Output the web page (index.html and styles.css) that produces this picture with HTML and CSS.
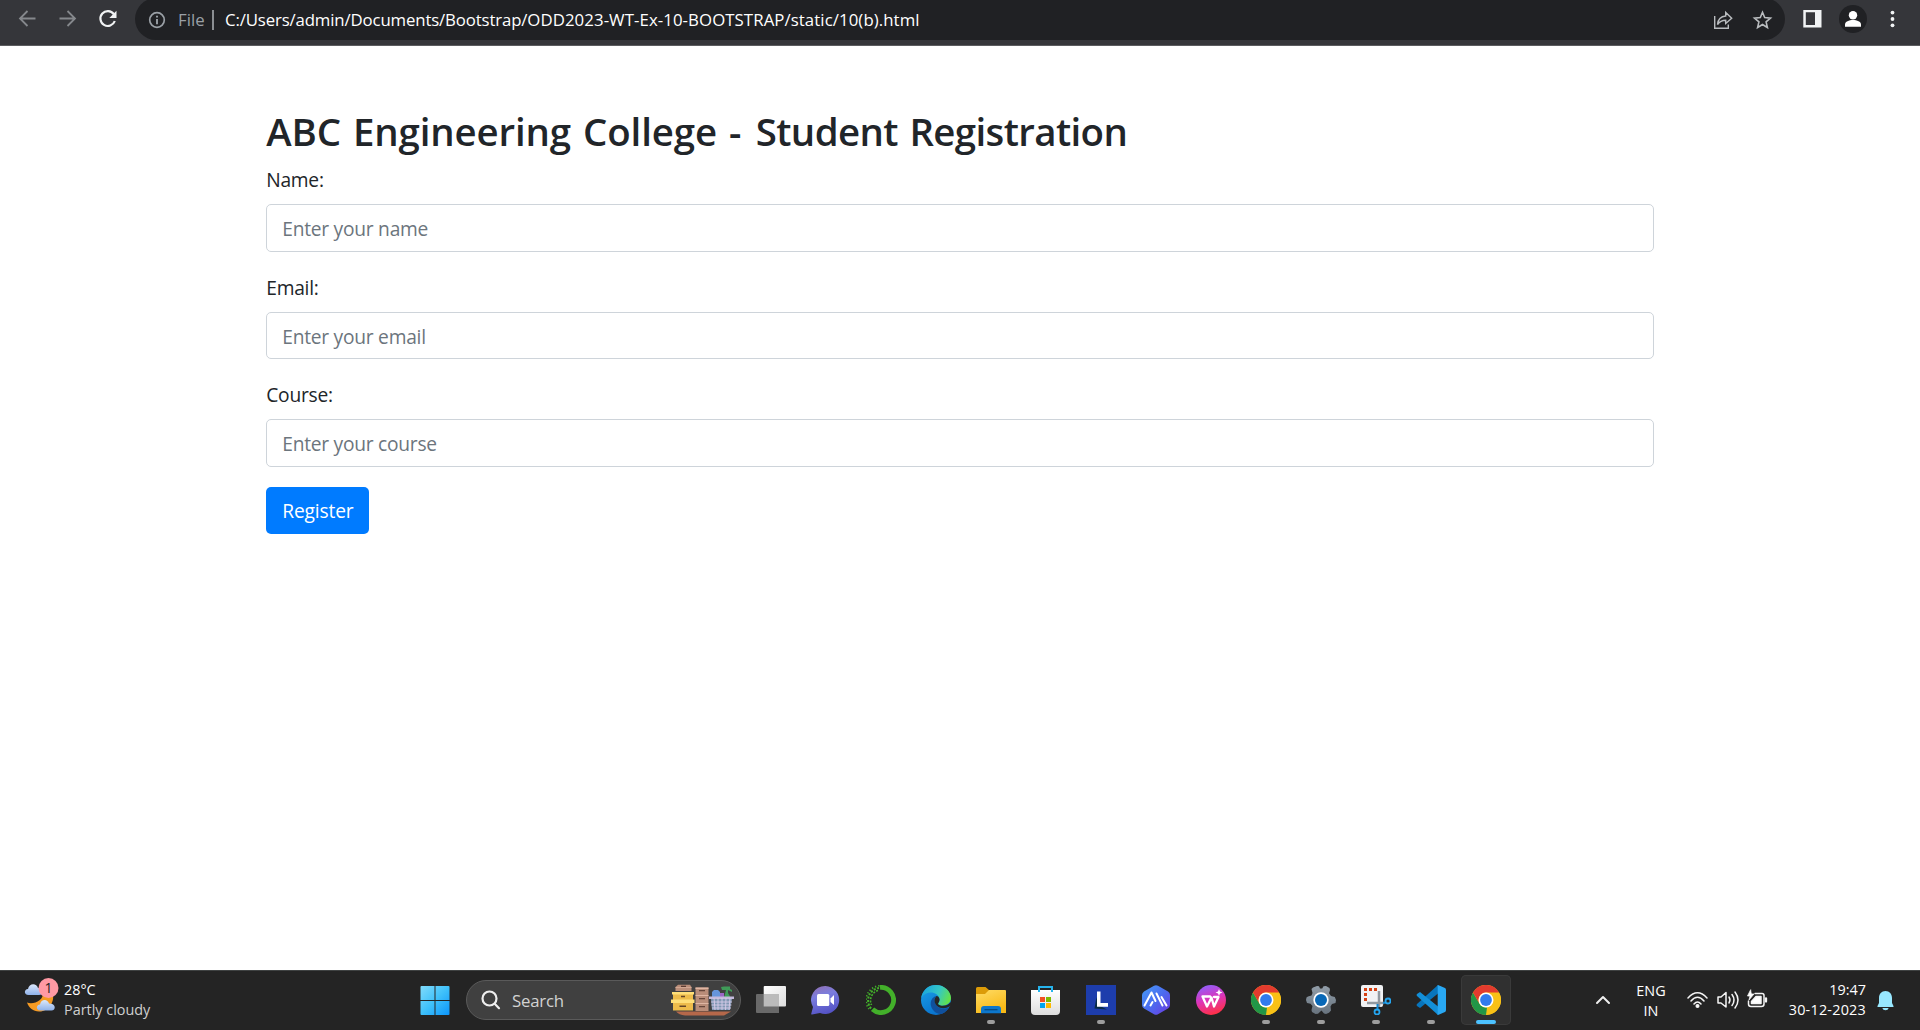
FILE: index.html
```html
<!DOCTYPE html>
<html lang="en">
<head>
<meta charset="utf-8">
<title>Student Registration</title>
<link rel="stylesheet" href="styles.css">
</head>
<body>
<header class="toolbar">
  <svg class="nav-icons" width="135" height="45" viewBox="0 0 135 45" fill="none">
    <path d="M35.500 18.500H20.500M27.500 11L20 18.500L27.500 26M59.500 18.500H74.500M67.500 11L75 18.500L67.500 26" stroke="#85888c" stroke-width="1.800"/>
    <path d="M113.800 14.200A7.400 7.400 0 1 0 114.800 21" stroke="#f1f3f4" stroke-width="2.200"/>
    <path d="M116.500 10.800V18H109.300Z" fill="#f1f3f4"/>
  </svg>
  <div class="omnibox">
    <svg class="info" width="18" height="18" viewBox="0 0 18 18" fill="none" stroke="#9aa0a6"><circle cx="9" cy="9" r="7.300" stroke-width="1.700"/><path d="M9 8V13.200M9 4.800V6.600" stroke-width="1.900"/></svg>
    <span class="scheme">File</span>
    <span class="divider"></span>
    <span class="url"><span class="url-root">C:/Users/admin/Documents/Bootstrap/</span><span class="url-rest">ODD2023-WT-Ex-10-BOOTSTRAP/static/10(b).html</span></span>
    <svg class="actions" width="60" height="20" viewBox="0 0 60 20" fill="none" stroke="#b9bcbf" stroke-width="1.400">
      <path d="M1.700 6V18.300H15.300V14.500M4.500 14.500C5 9 8 6.400 12.700 6V2.500L18.700 8.200L12.700 13.500V10.200C8.800 10.200 6.500 11.500 4.500 14.500Z"/>
      <path d="M49.500 2.300L51.700 7.600L57.500 8.100L53.100 11.900L54.400 17.500L49.500 14.500L44.600 17.500L45.900 11.900L41.500 8.100L47.300 7.600Z" stroke-width="1.600"/>
    </svg>
  </div>
  <svg class="menu-icons" width="135" height="45" viewBox="0 0 135 45">
    <path fill="#f1f3f4" fill-rule="evenodd" d="M18.300 10H36.500V27.500H18.300ZM20.800 12.300V25H30V12.300Z"/>
    <circle cx="68" cy="19" r="14" fill="#202124"/>
    <circle cx="68" cy="15.200" r="4.200" fill="#fff"/><path d="M60 26.700V24.500C60 18.500 76 18.500 76 24.500V26.700Z" fill="#fff"/>
    <g fill="#f1f3f4"><circle cx="107.500" cy="12.600" r="1.900"/><circle cx="107.500" cy="19" r="1.900"/><circle cx="107.500" cy="25.300" r="1.900"/></g>
  </svg>
</header>

<main class="container">
  <h2><span class="college">ABC Engineering College <span class="dash">-</span> </span>Student Registration</h2>
  <form>
    <div class="form-group"><label for="name">Name:</label><input class="form-control" id="name" placeholder="Enter your name"></div>
    <div class="form-group"><label for="email">Email:</label><input class="form-control" id="email" placeholder="Enter your email"></div>
    <div class="form-group"><label for="course">Course:</label><input class="form-control" id="course" placeholder="Enter your course"></div>
    <button class="btn" type="button">Register</button>
  </form>
</main>

<footer class="taskbar">
  <div class="weather">
    <svg width="40" height="40" viewBox="0 0 40 40">
      <defs><linearGradient id="cloud" x2="0" y2="1"><stop stop-color="#dbe8fb"/><stop offset="1" stop-color="#8fb2ea"/></linearGradient></defs>
      <path d="M7 24.500C13 27 24 23 23 14H31.500C37 22 28 34 19 33.500C13 33.500 9 30 7 24.500Z" fill="#f59a23"/>
      <path d="M8.500 17C3.500 17 4 11 8 11C9 4.500 17 5 18 10C24 10 24 17 19 17Z" fill="url(#cloud)"/>
      <path d="M20.500 32.500C15.500 32.500 16 26.500 20 26.500C21 20.500 28 21 29 25.500C36.500 25.500 36 32.500 31.500 32.500Z" fill="url(#cloud)"/>
      <circle cx="28.500" cy="10" r="10" fill="#ff99a4"/>
      <text x="28.500" y="15" class="badge-text">1</text>
    </svg>
    <div class="weather-text"><div>28°C</div><div class="dim">Partly cloudy</div></div>
  </div>

  <div class="apps">
    <div class="app">
      <svg width="30" height="30" viewBox="-.5 0 30 30"><defs><linearGradient id="win" gradientUnits="userSpaceOnUse" x1="0" y1="0" x2="30" y2="30"><stop stop-color="#83dcfc"/><stop offset=".5" stop-color="#3fc1fa"/><stop offset="1" stop-color="#0a93fb"/></linearGradient></defs><path fill="url(#win)" d="M0 2Q0 1 1 1H14V15H0ZM15 1H28Q29 1 29 2V15H15ZM0 16H14V30H1Q0 30 0 29ZM15 16H29V29Q29 30 28 30H15Z"/></svg>
    </div>
    <div class="search">
      <svg width="20" height="20" viewBox="0 0 20 20" fill="none" stroke="#eee" stroke-width="2.200" stroke-linecap="round"><circle cx="8.500" cy="8.500" r="7"/><path d="M13.700 13.700L18 18.200"/></svg>
      <span class="search-label">Search</span>
      <svg class="art" width="64" height="32" viewBox="0 0 64 32">
        <path d="M5 27.500H60L53 31.500H14Q8 31 5 27.500Z" fill="#b5684a"/>
        <path d="M4.500 7V3L7 .7H19L20.500 3V7Z" fill="#b98d79"/><path d="M4.500 3H20.500V4H4.500Z" fill="#d1a793"/><path d="M10 1.700H15V3H10Z" fill="#5b3c32"/>
        <path d="M2 9H22V16H2Z" fill="#eebc4b"/><path d="M1 8H23V10.500H1Z" fill="#ffdf78"/><path d="M2 18H22V26.500H2Z" fill="#eebc4b"/><path d="M0 15.500H23.500V19H0Z" fill="#ffdf78"/>
        <path d="M10 11.800H14V13.200H10ZM8.500 21.500H15V23H8.500Z" fill="#654626"/>
        <path d="M24.500 3.500H37.500V27H24.500Z" fill="#b98d79"/><path d="M24.500 3.500H37.500V5H24.500ZM24.500 11H37.500V12H24.500ZM24.500 19H37.500V20H24.500Z" fill="#dfb6a3"/><path d="M28 6H34V7.200H28ZM28 14H34V15.200H28ZM28 22H34V23.200H28Z" fill="#66463a"/>
        <path d="M41 8L43 6H47L49 8V15H41Z" fill="#6695dc"/><path d="M49 9H53V14H49Z" fill="#9b67c5"/>
        <path d="M50 3L53 2.500H59V5L61 6V8L57 6V9L60 14H53L55 6H51Z" fill="#3f9b58"/>
        <path d="M40 15H61L59 26H41Z" fill="#8198b4"/><path d="M38 12.500H63V15H38Z" fill="#c4badc"/>
        <path d="M40 18H61M40.500 21H60.500M41 24H60M43 14L44 26M47 14V26M51 14V26M55 14L54.500 26M59 14L58 26" stroke="#d7cce9" stroke-width=".9"/>
      </svg>
    </div>
    <div class="app">
      <svg width="30" height="30" viewBox="0 0 30 30"><defs><linearGradient id="tv" x1="0" y1="0" x2="1" y2="1"><stop stop-color="#fff"/><stop offset="1" stop-color="#ddd"/></linearGradient></defs><rect x="7.700" y="1" width="22.300" height="20.500" rx="1" fill="url(#tv)"/><path d="M1 9H23V28H1Q0 28 0 27V10Q0 9 1 9Z" fill="#696969"/><path d="M7.700 9H23V21.500H7.700Z" fill="#bbb"/></svg>
    </div>
    <div class="app">
      <svg width="30" height="30" viewBox="0 0 30 30"><defs><linearGradient id="chat" x1=".2" y1="0" x2=".5" y2="1"><stop stop-color="#8f70b5"/><stop offset=".35" stop-color="#7b7dde"/><stop offset="1" stop-color="#5351c4"/></linearGradient></defs><path d="M14.500 1A14 14 0 1 1 9 28L1 29.500Q0 29.500 .3 28.500L2 22A14 14 0 0 1 14.500 1Z" fill="url(#chat)"/><rect x="6" y="9" width="12.300" height="12" rx="1.500" fill="#fff"/><path d="M19.500 13.500L23 10V20L19.500 17Z" fill="#fff"/></svg>
    </div>
    <div class="app">
      <svg width="30" height="30" viewBox="0 0 30 30" fill="none" stroke="#43b02a"><path d="M14 2.400A12.600 12.600 0 1 1 6.500 24.300" stroke-width="4.800"/><path d="M13 3A12.500 12.500 0 0 0 5.500 24" stroke-width="2" stroke-dasharray="2 1.500"/><path d="M13.500.8A14.500 14.500 0 0 0 3 24" stroke-width="1.700" stroke-dasharray="1.300 2"/><path d="M12 5.500A10.500 10.500 0 0 0 5.500 20" stroke-width="1.600" stroke-dasharray="2 1.300"/></svg>
    </div>
    <div class="app">
      <svg width="30" height="30" viewBox="0 0 30 30"><defs><linearGradient id="eg" x1="0" y1=".3" x2="1" y2=".6"><stop stop-color="#19a4df"/><stop offset=".55" stop-color="#35c7c4"/><stop offset="1" stop-color="#65e343"/></linearGradient><linearGradient id="eb" x2=".6" y2="1"><stop stop-color="#1ba1e8"/><stop offset="1" stop-color="#0870cc"/></linearGradient></defs><circle cx="15" cy="15" r="15" fill="url(#eb)"/><path d="M.2 13C1.500 4.500 8 0 15 0C23.500 0 30 6.500 30 13C30 20 21 22.500 17.500 19.500C16.200 18 19 17.300 18.500 14C17 6 5 5 .2 13Z" fill="url(#eg)"/><path d="M15.500 11C10.500 12 9 17 10 21C11.500 26 16 29.500 20.500 28.900C24 27.500 27 25 28 22.500C24 24.500 18 24 15.500 20.500C13 17 12.700 13 15.500 11Z" fill="#10509d"/><path d="M15.500 11C12.500 14 13 18 16 21C19.500 24 25 24 29 21L31 24V20L29.500 17C27 21 20.500 22 17.500 19.500C16 18 19 17.300 18.500 14C18 12 17 11 15.500 11Z" fill="#262626"/></svg>
    </div>
    <div class="app open">
      <svg width="30" height="30" viewBox="0 0 30 30"><defs><linearGradient id="fo" x2=".5" y2="1"><stop stop-color="#ffdc66"/><stop offset="1" stop-color="#f8b916"/></linearGradient></defs><path d="M0 12V3.500Q0 2 1.500 2H9.500L13 5H28Q29 5 29 7V12Z" fill="#dc9b08"/><path d="M0 9H9L13 5H29Q30 5 30 6V28H0Z" fill="url(#fo)"/><path d="M5 28.200V24Q5 21 8 21H22Q25 21 25 24V28.200Z" fill="#0d77cc"/><path d="M8.500 24.700H21.500" stroke="#064b83" stroke-width="1.300"/></svg>
    </div>
    <div class="app">
      <svg width="30" height="30" viewBox="0 0 30 30"><defs><linearGradient id="st" x2="0" y2="1"><stop stop-color="#fff"/><stop offset="1" stop-color="#ddd"/></linearGradient></defs><path d="M0 5H29V26Q29 30 25 30H4Q0 30 0 26Z" fill="url(#st)"/><path d="M8 7V2H21V7" fill="none" stroke="#26b4ed" stroke-width="2"/><path fill="#f25022" d="M9 12H14V17H9Z"/><path fill="#7fba00" d="M15 12H20V17H15Z"/><path fill="#00a4ef" d="M9 18H14V23H9Z"/><path fill="#ffb900" d="M15 18H20V23H15Z"/></svg>
    </div>
    <div class="app open">
      <svg width="30" height="30" viewBox="0 0 30 30"><path d="M0 0H30V30H0Z" fill="#1d3dac"/><path d="M10.500 12L8.500 23.500L21 24.500L12 20Z" fill="#092b47"/><path d="M11 6.500H14.500V18H22V21.700H11Z" fill="#fff"/></svg>
    </div>
    <div class="app">
      <svg width="30" height="30" viewBox="0 0 30 30"><defs><linearGradient id="hx" x2="1" y2="1"><stop stop-color="#469df5"/><stop offset=".5" stop-color="#4b6cf0"/><stop offset="1" stop-color="#6d38df"/></linearGradient></defs><path d="M13 .8Q15 -.2 17 .8L27 6.500Q29 7.500 29 10V20Q29 22 27 23.500L17 29.200Q15 30.200 13 29.200L3 23.500Q1 22 1 20V10Q1 8 3 6.500Z" fill="url(#hx)"/><path d="M3.500 20.500L10.500 7.500L14.500 16M9.500 20.500L11.500 17M15.500 8.500L21.500 20.500M20.500 12L25.500 20.500" fill="none" stroke="#fff" stroke-width="2" stroke-linecap="round" stroke-linejoin="round"/></svg>
    </div>
    <div class="app">
      <svg width="30" height="30" viewBox="0 0 30 30"><defs><linearGradient id="wp" x1=".2" y1="0" x2=".5" y2="1"><stop stop-color="#8b62ff"/><stop offset=".5" stop-color="#dc35bb"/><stop offset="1" stop-color="#ff3047"/></linearGradient></defs><circle cx="15" cy="15" r="15" fill="url(#wp)"/><path d="M14 11.500H6.500L11 21.500L15.500 12.500L18 21.500L22.500 12H18" fill="none" stroke="#fff" stroke-width="2.300" stroke-linejoin="round" stroke-linecap="round"/><path d="M23 4L24 6.500L26.500 7.500L24 8.500L23 11L22 8.500L19.500 7.500L22 6.500Z" fill="#fff"/></svg>
    </div>
    <div class="app open">
      <svg width="30" height="30" viewBox="0 0 30 30"><g id="chrome"><circle cx="15" cy="15" r="15" fill="#f9c116"/><path d="M2 7.500L8.500 18.800Q11 23 16 22.500L15 30A15 15 0 0 1 2 7.500Z" fill="#229647"/><path d="M21.500 18.700L15 30A15 15 0 0 0 28 7.500H15A7.500 7.500 0 0 1 21.500 18.700Z" fill="#f9c116"/><path d="M2 7.500L8.500 18.700A7.500 7.500 0 0 1 15 7.500H28A15 15 0 0 0 2 7.500Z" fill="#e33b2e"/><circle cx="15" cy="15" r="7.500" fill="#fff"/><circle cx="15" cy="15" r="5.900" fill="#317bed"/></g></svg>
    </div>
    <div class="app open">
      <svg width="30" height="30" viewBox="0 0 30 30"><defs><linearGradient id="gear" x2="0" y2="1"><stop stop-color="#919da8"/><stop offset="1" stop-color="#68737e"/></linearGradient></defs><path d="M11 .9L13 1.300L14 3.600H16.200L17.500 1.300L20 1.100L23.500 3L24 5L23 8.200L25 11L28.800 12L30 15L29.500 18L26 19L24.500 21.500L25 25.500L23 27.700L20 29L18 28.500L15.500 25.500L12 28.700L9.500 29L6 27L5.500 25L6.500 21L4.500 18.800L1 18L0 15L.5 12.500L2 11.500L5.500 10.500L6.500 8L5.500 4L7 2.500Z" fill="url(#gear)"/><circle cx="15" cy="15" r="7.700" fill="#fff"/><circle cx="15" cy="15" r="6" fill="#0868b7"/></svg>
    </div>
    <div class="app open">
      <svg width="30" height="30" viewBox="0 0 30 30"><rect width="22" height="22" rx="2" fill="#f1f2f4"/><path d="M4.500 16V4.500H18" fill="none" stroke="#d64012" stroke-width="3" stroke-dasharray="3 2"/><path d="M18 6V22M6 18H23" fill="none" stroke="#9299a0" stroke-width="2.500"/><path d="M16.500 19V24M22 18L25 17.500" stroke="#1687cf" stroke-width="2"/><circle cx="27" cy="16" r="2.500" fill="#242424" stroke="#25a5ef" stroke-width="1.800"/><circle cx="16" cy="27" r="2.500" fill="#242424" stroke="#25a5ef" stroke-width="1.800"/></svg>
    </div>
    <div class="app open">
      <svg width="30" height="30" viewBox="0 0 30 30"><path d="M22 8.500L4 23L1 21Q0 20 1 19L22 0Z" fill="#0875bc"/><path d="M22 21.500L4 7L1 9Q0 10 1 11L22 30Z" fill="#138fd8"/><path d="M22 0L29 3Q30 3.500 30 5V25Q30 26.500 29 27L22 30Q21 29.500 21.700 28.500V1.500Q21 .5 22 0Z" fill="#29a8f3"/></svg>
    </div>
    <div class="app open active"><svg width="30" height="30" viewBox="0 0 30 30"><use href="#chrome"/></svg></div>
  </div>

  <div class="tray">
    <svg class="chevron" width="16" height="10" viewBox="0 0 16 10" fill="none" stroke="#eee" stroke-width="2" stroke-linecap="round" stroke-linejoin="round"><path d="M2 8L8 2L14 8"/></svg>
    <div class="lang"><div>ENG</div><div>IN</div></div>
    <svg class="status" width="82" height="22" viewBox="0 0 82 22" fill="none" stroke="#f4f4f4" stroke-width="1.500" stroke-linecap="round" stroke-linejoin="round">
      <path d="M1 9Q10.500 -1.500 20 9M4 12Q10.500 4.500 17 12M7 15Q10.500 11 14 15"/><circle cx="10.500" cy="17" r="1.300" fill="#fff"/>
      <path d="M31 8H34L39 3.500V18L34 14H31Z"/><path d="M42 8Q44 11 42 14M45 5.500Q49 11 45 16.500M48 3Q54 11 48 19"/>
      <path d="M68 4.500H75Q77 4.500 77 6.500V15Q77 17.500 74.500 17.500H64Q61.500 17.500 61.500 15V12"/><path d="M69 7.500H74V14.500H64.500V12.500Z" fill="#fff"/><path d="M79 9.500V12.500" stroke-width="2.300"/><path d="M63.500 1L60.500 7H63L62 11L67 5H64.500Z" fill="#fff" stroke-width=".8"/>
    </svg>
    <div class="clock"><div>19:47</div><div class="date">30-12-2023</div></div>
    <svg class="bell" width="17" height="20" viewBox="0 0 17 20" fill="#98e8ff"><path d="M8.500 0C12.500 0 15 3 15 7V12L16.500 15Q17 16 16 16H1Q0 16 .5 15L2 12V7C2 3 4.500 0 8.500 0ZM5.300 17H11.700Q11 19.300 8.500 19.300Q6 19.300 5.300 17Z"/></svg>
  </div>
</footer>
</body>
</html>
```
FILE: styles.css
```css
* { box-sizing: border-box; }
body { margin: 0; height: 1030px; overflow: hidden; display: flex; flex-direction: column; background: #fff; color: #212529; font-family: "Open Sans", "Noto Sans", sans-serif; font-size: 19.2px; }
svg { display: block; flex: none; }

.toolbar { height: 46px; flex: none; display: flex; align-items: flex-start; background: #35363a; border-bottom: 1px solid #5b5c5f; overflow: hidden; }
.omnibox { flex: 1; height: 42px; margin-top: -2px; padding: 1px 12px 0 13px; border-radius: 21px; background: #202124; display: flex; align-items: center; color: #fff; font-size: 16.8px; white-space: nowrap; }
.scheme { margin-left: 12px; width: 34px; color: #9aa0a6; }
.divider { width: 2px; height: 20px; background: #8b8e92; }
.url { margin-left: 11px; flex: 1; }
.url-root { letter-spacing: -.14px; }
.url-rest { letter-spacing: .08px; }

.container { flex: 1; width: 1425px; margin: 0 auto; padding: 60px 18.75px 0; }
h2 { margin: 0 0 10px; height: 48px; line-height: 51px; font-size: 38.4px; font-weight: 600; letter-spacing: -.6px; word-spacing: 2.2px; white-space: nowrap; }
.college { letter-spacing: -.12px; }
.dash { margin-right: 2.5px; }
form { letter-spacing: -.25px; }
.form-group { margin-bottom: 20px; }
label { display: block; height: 30px; line-height: 31px; margin-bottom: 10px; }
.form-control { display: block; width: 100%; height: 47.5px; padding: 9px 15px 7px; border: 1px solid #ced4da; border-radius: 5px; font: inherit; letter-spacing: inherit; background: #fff; }
.form-control::placeholder { color: #6c757d; opacity: 1; }
.btn { display: block; height: 47.5px; width: 102.5px; padding: 0 0 0 16px; border: 0; border-radius: 5px; background: #007bff; color: #fff; font: inherit; letter-spacing: -.15px; text-align: left; }

.taskbar { height: 60px; flex: none; display: grid; grid-template-columns: 407px 1107px 406px; background: #242424; border-top: 1px solid #3f4242; color: #fff; font-size: 14.4px; line-height: 20px; white-space: nowrap; }
.weather { display: flex; padding: 7px 0 0 20px; }
.weather-text { margin-left: 4px; padding-top: 2px; }
.dim { color: #cfcfcf; }
.badge-text { font-size: 14px; text-anchor: middle; fill: #222; }
.apps { display: flex; align-items: center; height: 58px; }
.app { position: relative; width: 55px; height: 50px; flex: none; display: flex; align-items: center; justify-content: center; }
.open::after { content: ""; position: absolute; left: 23.5px; bottom: 1px; width: 8px; height: 4px; border-radius: 2px; background: #9d9d9d; }
.active { width: 50px; margin-left: 2.5px; border-radius: 5px; background: #303030; box-shadow: inset 0 0 0 1px #3a3a3a; }
.active::after { left: 15px; width: 20px; background: #4cc2ff; }
.search { width: 275px; height: 40px; margin: 0 2.5px 0 4px; flex: none; padding: 0 5px 0 14px; border: 1px solid #5a5a5a; border-radius: 20px; background: #404040; display: flex; align-items: center; }
.search-label { margin-left: 11px; padding-top: 1px; flex: 1; font-size: 16.8px; letter-spacing: -.2px; color: #d2d2d2; }

.tray { display: flex; }
.chevron { margin: 24px 0 0 81px; }
.lang { width: 60px; margin-left: 10px; padding-top: 9.500px; text-align: center; }
.status { margin: 18px 0 0 6px; }
.clock { width: 90px; margin-left: 7px; padding-top: 8.500px; text-align: right; }
.date { letter-spacing: .22px; }
.bell { margin: 20px 0 0 11px; }
```
